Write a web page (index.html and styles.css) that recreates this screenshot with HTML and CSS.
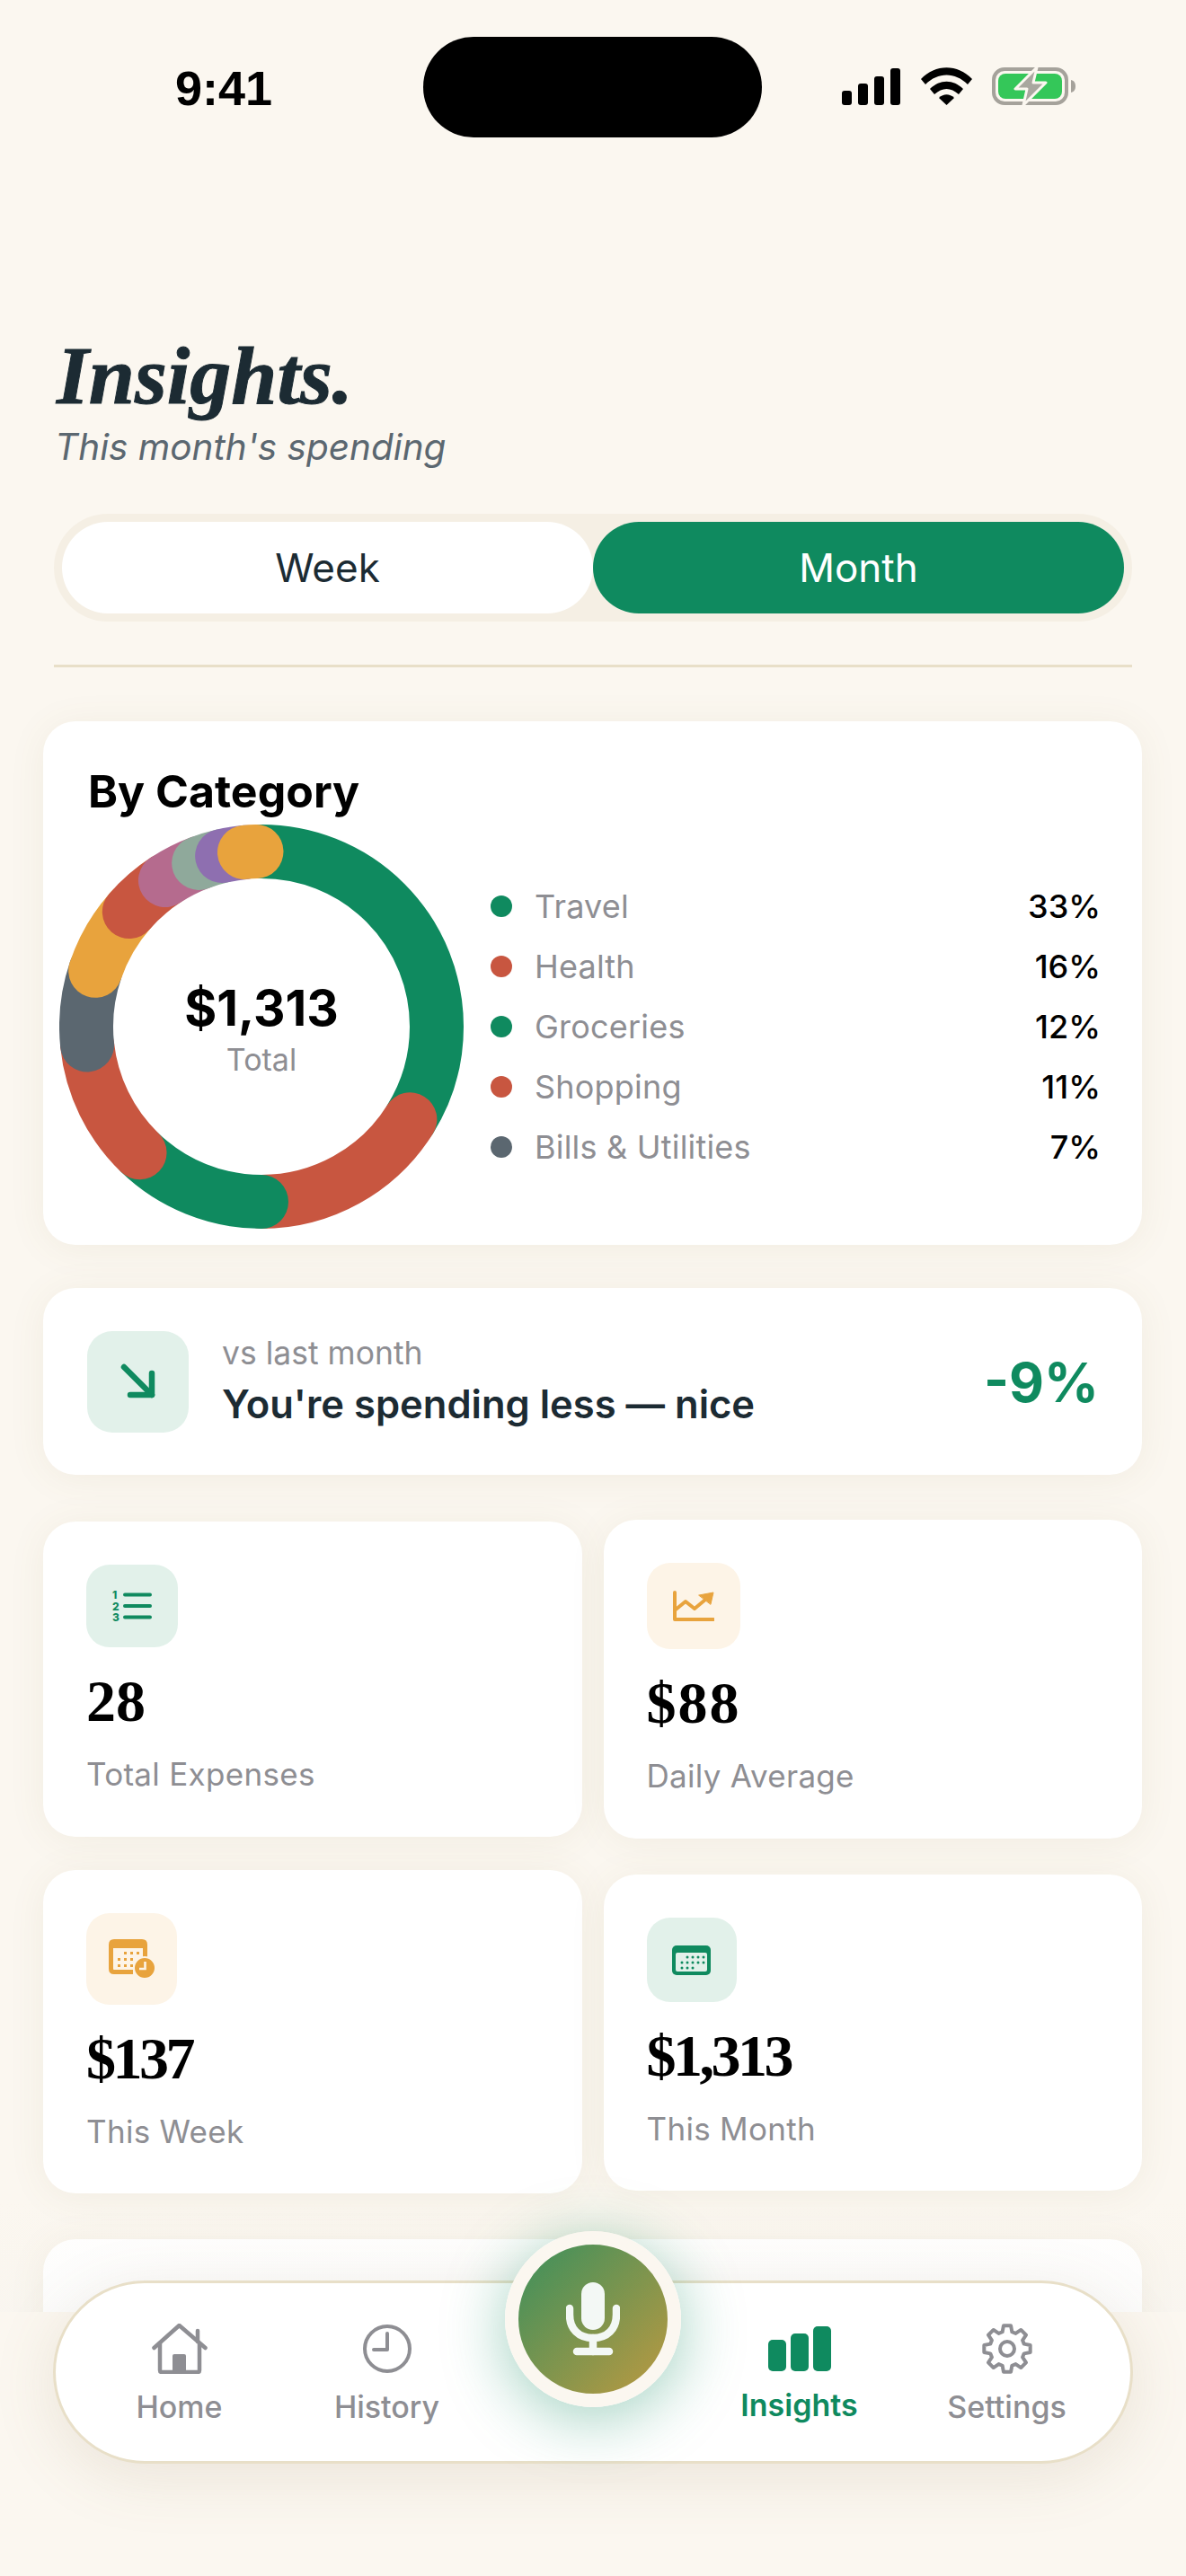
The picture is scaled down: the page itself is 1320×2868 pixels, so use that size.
FILE: index.html
```html
<!DOCTYPE html>
<html>
<head>
  <title>Insights</title>
  <link rel="stylesheet" href="styles.css">
</head>
<body>
  <div class="screen">
    <header class="status">
      <span class="time">9:41</span>
      <div class="island"></div>
      <div class="status-icons">
        <svg class="ic-signal" viewBox="0 0 65 41"><rect x="0" y="25" width="11" height="16" rx="3"/><rect x="18" y="17" width="11" height="24" rx="3"/><rect x="36" y="9" width="11" height="32" rx="3"/><rect x="54" y="0" width="11" height="41" rx="3"/></svg>
        <svg class="ic-wifi" viewBox="0 0 57 42"><path d="M0 13 C16 -4 41 -4 57 13 L52 19 C38 5 19 5 5 19Z"/><path d="M10 24 C21 13 36 13 47 24 L42 30 C33 22 24 22 15 30Z"/><path d="M20 34 C25 29 32 29 37 34 L28.500 42Z"/></svg>
        <svg class="ic-battery" viewBox="0 0 94 44"><rect x="2" y="3" width="81" height="38" rx="12" fill="none" stroke="#a5a29b" stroke-width="4"/><rect x="7" y="8" width="71" height="28" rx="8" fill="#34c759"/><path d="M88 15 C92 16 93 19 93 22 C93 25 92 28 88 29Z" fill="#a5a29b"/><path d="M50 1 L26 25 H39 L35 43 L60 18 H46Z" fill="#a9a79f" stroke="#fbf7f0" stroke-width="3" stroke-linejoin="round"/></svg>
      </div>
    </header>

    <main class="content">
      <h1 class="title">Insights.</h1>
      <p class="subtitle">This month's spending</p>

      <div class="segment">
        <button class="seg-btn">Week</button>
        <button class="seg-btn seg-on">Month</button>
      </div>
      <div class="divider"></div>

      <section class="card cat-card">
        <h2>By Category</h2>
        <div class="cat-body">
          <div class="donut">
            <svg viewBox="0 0 450 450" width="450" height="450">
              <g fill="none" stroke-width="60" stroke-linecap="round">
                <circle cx="225" cy="225" r="195" pathLength="360" stroke="#0f8a5f" stroke-dasharray="122 360" transform="rotate(-90 225 225)"/>
                <circle cx="225" cy="225" r="195" pathLength="360" stroke="#c85640" stroke-dasharray="58 360" transform="rotate(32 225 225)"/>
                <circle cx="225" cy="225" r="195" pathLength="360" stroke="#0f8a5f" stroke-dasharray="44 360" transform="rotate(90 225 225)"/>
                <circle cx="225" cy="225" r="195" pathLength="360" stroke="#c85640" stroke-dasharray="40 360" transform="rotate(134 225 225)"/>
                <circle cx="225" cy="225" r="195" pathLength="360" stroke="#5b6770" stroke-dasharray="25 360" transform="rotate(174 225 225)"/>
                <circle cx="225" cy="225" r="195" pathLength="360" stroke="#e8a33d" stroke-dasharray="23 360" transform="rotate(198.600 225 225)"/>
                <circle cx="225" cy="225" r="195" pathLength="360" stroke="#c85640" stroke-dasharray="16 360" transform="rotate(221 225 225)"/>
                <circle cx="225" cy="225" r="195" pathLength="360" stroke="#b56b8e" stroke-dasharray="13 360" transform="rotate(236.700 225 225)"/>
                <circle cx="225" cy="225" r="195" pathLength="360" stroke="#8fa99b" stroke-dasharray="8 360" transform="rotate(249 225 225)"/>
                <circle cx="225" cy="225" r="195" pathLength="360" stroke="#8e6fb0" stroke-dasharray="8 360" transform="rotate(257 225 225)"/>
                <circle cx="225" cy="225" r="195" pathLength="360" stroke="#e8a33d" stroke-dasharray="4 360" transform="rotate(264.400 225 225)"/>
              </g>
            </svg>
            <div class="donut-label">
              <strong>$1,313</strong>
              <span>Total</span>
            </div>
          </div>
          <ul class="legend">
            <li><i class="dot dot-green"></i><span>Travel</span><b>33%</b></li>
            <li><i class="dot dot-red"></i><span>Health</span><b>16%</b></li>
            <li><i class="dot dot-green"></i><span>Groceries</span><b>12%</b></li>
            <li><i class="dot dot-red"></i><span>Shopping</span><b>11%</b></li>
            <li><i class="dot dot-slate"></i><span>Bills &amp; Utilities</span><b>7%</b></li>
          </ul>
        </div>
      </section>

      <section class="card compare">
        <div class="compare-icon">
          <svg viewBox="0 0 40 40" width="40" height="40" fill="none" stroke="#0f8a5f" stroke-width="6.500" stroke-linecap="round" stroke-linejoin="round"><path d="M4 4 L35 35"/><path d="M35 11 V35 H11"/></svg>
        </div>
        <div class="compare-text">
          <span>vs last month</span>
          <strong>You're spending less — nice</strong>
        </div>
        <div class="compare-num">-9%</div>
      </section>

      <div class="stats">
        <div class="stat-col">
          <section class="card stat stat-a">
            <div class="stat-icon tint-green icon-a">
              <svg viewBox="0 0 44 38" width="44" height="38"><text x="0" y="11" class="num-t">1</text><text x="0" y="23.500" class="num-t">2</text><text x="0" y="36" class="num-t">3</text><g stroke="#0f8a5f" stroke-width="4" stroke-linecap="round"><path d="M14 6.500 H42"/><path d="M14 19 H42"/><path d="M14 31.500 H42"/></g></svg>
            </div>
            <div class="stat-val">28</div>
            <div class="stat-label">Total Expenses</div>
          </section>
          <section class="card stat stat-c">
            <div class="stat-icon tint-amber icon-c">
              <svg viewBox="0 0 52 44" width="52" height="44">
                <path d="M6 0 H37 Q43 0 43 6 V20 H38 V10 H5 V33 Q5 34 6 34 H27 V39 H6 Q0 39 0 33 V6 Q0 0 6 0Z" fill="#e8a33d"/>
                <g fill="#e8a33d"><rect x="17" y="14" width="3" height="3"/><rect x="24" y="14" width="3" height="3"/><rect x="31" y="14" width="3" height="3"/><rect x="10" y="21" width="3" height="3"/><rect x="17" y="21" width="3" height="3"/><rect x="24" y="21" width="3" height="3"/><rect x="10" y="28" width="3" height="3"/><rect x="17" y="28" width="3" height="3"/><rect x="24" y="28" width="3" height="3"/></g>
                <circle cx="40" cy="32" r="12" fill="#e8a33d" stroke="#fdf4e7" stroke-width="2"/>
                <path d="M40.500 25 V33 H34" fill="none" stroke="#fdf4e7" stroke-width="2.600"/>
              </svg>
            </div>
            <div class="stat-val val-tight">$137</div>
            <div class="stat-label">This Week</div>
          </section>
        </div>
        <div class="stat-col">
          <section class="card stat stat-b">
            <div class="stat-icon tint-amber icon-b">
              <svg viewBox="0 0 46 34" width="46" height="34" fill="none" stroke="#e8a33d" stroke-width="4" stroke-linecap="round" stroke-linejoin="round"><path d="M2 2 V32 H45"/><path d="M3 21 L14 12 L24 20 L36 10"/><path d="M29 5 L45 2 L42 15Z" fill="#e8a33d" stroke-width="1"/></svg>
            </div>
            <div class="stat-val val-wide">$88</div>
            <div class="stat-label">Daily Average</div>
          </section>
          <section class="card stat stat-d">
            <div class="stat-icon tint-green icon-d">
              <svg viewBox="0 0 43 33" width="43" height="33">
                <rect width="43" height="33" rx="5" fill="#0f8a5f"/>
                <rect x="4" y="8" width="35" height="21" rx="2" fill="#e2f1ea"/>
                <g fill="#0f8a5f"><circle cx="17" cy="13" r="1.500"/><circle cx="23" cy="13" r="1.500"/><circle cx="29" cy="13" r="1.500"/><circle cx="35" cy="13" r="1.500"/><circle cx="11" cy="19" r="1.500"/><circle cx="17" cy="19" r="1.500"/><circle cx="23" cy="19" r="1.500"/><circle cx="29" cy="19" r="1.500"/><circle cx="35" cy="19" r="1.500"/><circle cx="11" cy="25" r="1.500"/><circle cx="17" cy="25" r="1.500"/><circle cx="23" cy="25" r="1.500"/></g>
              </svg>
            </div>
            <div class="stat-val val-tight">$1,313</div>
            <div class="stat-label">This Month</div>
          </section>
        </div>
      </div>

      <section class="card peek"></section>
    </main>

    <div class="fade"></div>

    <nav class="tabbar">
      <a class="tab">
        <svg viewBox="0 0 62 56" width="62" height="56" fill="none" stroke="#8e8e93" stroke-width="4.500" stroke-linecap="round" stroke-linejoin="round"><path d="M2.500 27 L30.500 2 L59.500 27"/><path d="M51 20 V8"/><path d="M9 22 V52 Q9 54 11 54 H51 Q53 54 53 52 V22"/><rect x="23" y="34" width="15" height="20" rx="2" fill="#8e8e93" stroke="none"/></svg>
        <span>Home</span>
      </a>
      <a class="tab">
        <svg viewBox="0 0 54 54" width="54" height="54" fill="none" stroke="#8e8e93" stroke-width="4" stroke-linecap="round" stroke-linejoin="round"><circle cx="27" cy="27" r="25"/><path d="M27 10 V28 H12"/></svg>
        <span>History</span>
      </a>
      <div class="tab-gap"></div>
      <a class="tab tab-on">
        <svg viewBox="0 0 70 50" width="70" height="50" fill="#0f8a5f"><rect x="0" y="15" width="20" height="35" rx="5"/><rect x="25" y="8" width="20" height="42" rx="5"/><rect x="50" y="0" width="20" height="50" rx="5"/></svg>
        <span>Insights</span>
      </a>
      <a class="tab">
        <svg viewBox="0 0 58 56" width="58" height="56" fill="none" stroke="#8e8e93" stroke-width="4" stroke-linejoin="round"><path d="M23.630 9.260 L24.930 2.320 H33.070 L34.370 9.260 L38.450 10.950 L44.280 6.960 L50.040 12.720 L46.050 18.550 L47.740 22.630 L54.680 23.930 V32.070 L47.740 33.370 L46.050 37.450 L50.040 43.280 L44.280 49.040 L38.450 45.050 L34.370 46.740 L33.070 53.680 H24.930 L23.630 46.740 L19.550 45.050 L13.720 49.040 L7.960 43.280 L11.950 37.450 L10.260 33.370 L3.320 32.070 V23.930 L10.260 22.630 L11.950 18.550 L7.960 12.720 L13.720 6.960 L19.550 10.950Z"/><circle cx="29" cy="28" r="8"/></svg>
        <span>Settings</span>
      </a>
    </nav>

    <button class="mic">
      <svg viewBox="0 0 60 82" width="60" height="82" fill="none" stroke="#f3f8f5" stroke-width="8.500" stroke-linecap="round"><rect x="17" y="0" width="26" height="53" rx="13" fill="#f3f8f5" stroke="none"/><path d="M4 29 V36 C4 52 14 62 30 62 C46 62 56 52 56 36 V29"/><path d="M30 62 V77"/><path d="M12 77 H48"/></svg>
    </button>
  </div>
</body>
</html>
```

FILE: styles.css
```css
* { margin: 0; padding: 0; box-sizing: border-box; }
html, body { width: 1320px; height: 2868px; overflow: hidden; }
body {
  font-family: "Inter", "Liberation Sans", sans-serif;
  background: #fbf7f0;
  color: #000;
}
.screen {
  position: relative;
  width: 1320px;
  height: 2868px;
  overflow: hidden;
}

/* status bar */
.status {
  display: flex;
  align-items: flex-start;
  height: 153px;
  padding: 41px 0 0 0;
}
.time {
  width: 471px;
  padding: 30px 0 0 195px;
  font-family: "Liberation Sans", sans-serif;
  font-size: 54px;
  font-weight: 700;
  line-height: 54px;
}
.island {
  width: 377px;
  height: 112px;
  background: #000;
  border-radius: 56px;
}
.status-icons {
  display: flex;
  align-items: center;
  margin: 33px 0 0 89px;
}
.ic-signal { width: 65px; height: 41px; }
.ic-wifi { width: 57px; height: 42px; margin-left: 23px; }
.ic-battery { width: 94px; height: 44px; margin-left: 22px; }

/* header */
.content { padding: 0 49px 0 48px; height: 2421px; overflow: hidden; }
.title {
  margin: 220px 0 0 15px;
  font-family: "Liberation Serif", serif;
  font-style: italic;
  font-weight: 700;
  font-size: 92px;
  line-height: 90px;
  -webkit-text-stroke: 1px #1c2b33;
  color: #1c2b33;
}
.subtitle {
  margin: 10px 0 0 13px;
  font-style: italic;
  font-size: 40.500px;
  line-height: 50px;
  color: #5b6770;
}
.segment {
  display: flex;
  margin: 49px 11px 0 12px;
  height: 120px;
  padding: 9px;
  background: #f5efe4;
  border-radius: 60px;
}
.seg-btn {
  flex: 1;
  border: none;
  border-radius: 51px;
  background: #fff;
  font-family: inherit;
  font-size: 44px;
  color: #1c2b33;
}
.seg-on { background: #0f8a5f; color: #fff; }
.divider { height: 3px; margin: 48px 11px 0 12px; background: #e8dfc8; }

/* cards */
.card {
  background: #fff;
  border-radius: 36px;
  box-shadow: 0 4px 40px rgba(130, 110, 70, 0.08);
}
.cat-card { margin-top: 60px; height: 583px; padding: 48px 46px 0 18px; }
.cat-card h2 {
  margin-left: 32px;
  font-size: 50px;
  font-weight: 700;
  line-height: 60px;
}
.cat-body { display: flex; align-items: center; margin-top: 7px; }
.donut { position: relative; width: 450px; height: 450px; flex: none; }
.donut svg { display: block; }
.donut-label {
  position: absolute;
  inset: 0;
  display: flex;
  flex-direction: column;
  align-items: center;
  justify-content: center;
}
.donut-label strong { font-size: 55px; font-weight: 700; line-height: 60px; margin-top: 5px; }
.donut-label span { font-size: 34px; line-height: 40px; margin-top: 8px; color: #8e8e93; }
.legend { flex: 1; margin-left: 30px; list-style: none; }
.legend li { display: flex; align-items: center; height: 67px; font-size: 36px; }
.legend span { flex: 1; color: #8e8e93; margin-left: 25px; letter-spacing: 0.2px; }
.legend b { font-weight: 500; }
.dot { width: 24px; height: 24px; border-radius: 50%; }
.dot-green { background: #0f8a5f; }
.dot-red { background: #c85640; }
.dot-slate { background: #5b6770; }

.compare {
  display: flex;
  align-items: center;
  height: 208px;
  margin-top: 48px;
  padding: 0 48px 0 49px;
}
.compare-icon {
  display: flex;
  align-items: center;
  justify-content: center;
  width: 113px;
  height: 113px;
  border-radius: 28px;
  background: #e2f1ea;
}
.compare-text { flex: 1; display: flex; flex-direction: column; margin-left: 37px; }
.compare-text span { font-size: 35.500px; line-height: 44px; color: #8e8e93; }
.compare-text strong { font-size: 43.500px; font-weight: 600; line-height: 56px; color: #1c2b33; margin-top: 6px; }
.compare-num { font-size: 60px; font-weight: 700; color: #0f8a5f; margin-top: 2px; }

.stats { display: flex; gap: 24px; margin-top: 52px; }
.stat-col { flex: 1; display: flex; flex-direction: column; }
.stat { padding: 48px 48px 0 48px; }
.stat-a { height: 351px; }
.stat-b { height: 355px; margin-top: -2px; }
.stat-c { height: 360px; margin-top: 37px; }
.stat-d { height: 352px; margin-top: 40px; }
.stat-icon {
  display: flex;
  align-items: center;
  justify-content: center;
  border-radius: 26px;
}
.tint-green { background: #e2f1ea; }
.tint-amber { background: #fdf4e7; }
.icon-a { width: 102px; height: 92px; }
.icon-b { width: 104px; height: 96px; }
.icon-c { width: 101px; height: 102px; }
.icon-d { width: 100px; height: 94px; }
.num-t { font-family: "Inter", sans-serif; font-size: 12px; font-weight: 800; fill: #0f8a5f; }
.stat-val {
  margin-top: 24px;
  font-family: "Liberation Serif", serif;
  font-weight: 700;
  font-size: 66px;
  line-height: 72px;
}
.val-tight { letter-spacing: -3.500px; }
.val-wide { letter-spacing: 2px; }
.stat-label {
  margin-top: 23px;
  font-size: 35px;
  line-height: 44px;
  color: #8e8e93;
  letter-spacing: 0.3px;
}
.peek { height: 200px; margin-top: 51px; }

/* bottom bar */
.fade {
  position: absolute;
  left: 0;
  right: 0;
  top: 2450px;
  height: 124px;
  background: linear-gradient(to bottom, rgba(245, 240, 232, 0) 0%, rgba(245, 240, 232, 0.1) 40%, rgba(240, 240, 238, 0.2) 100%);
}
.tabbar {
  position: absolute;
  left: 59px;
  top: 2539px;
  width: 1202px;
  height: 204px;
  display: grid;
  grid-template-columns: 231px 231px 228px 231px 231px;
  padding-left: 22px;
  background: #fff;
  border: 3px solid #e8dfc8;
  border-radius: 102px;
  box-shadow: 0 14px 70px rgba(120, 100, 60, 0.13);
}
.tab {
  display: flex;
  flex-direction: column;
  align-items: center;
  padding-top: 45px;
  color: #8e8e93;
  font-size: 34px;
  font-weight: 500;
}
.tab svg { height: 56px; }
.tab span { margin-top: 15px; line-height: 44px; }
.tab-on { color: #0f8a5f; font-weight: 600; }
.tab-on span { margin-top: 13px; }
.mic {
  position: absolute;
  left: 562px;
  top: 2484px;
  width: 196px;
  height: 196px;
  display: flex;
  align-items: center;
  justify-content: center;
  border: 15px solid #fbf7f0;
  border-radius: 50%;
  background: linear-gradient(135deg, #2f8f5f, #c89a3e);
  background-origin: border-box;
  box-shadow: 0 12px 70px rgba(15, 138, 95, 0.4);
}
```
